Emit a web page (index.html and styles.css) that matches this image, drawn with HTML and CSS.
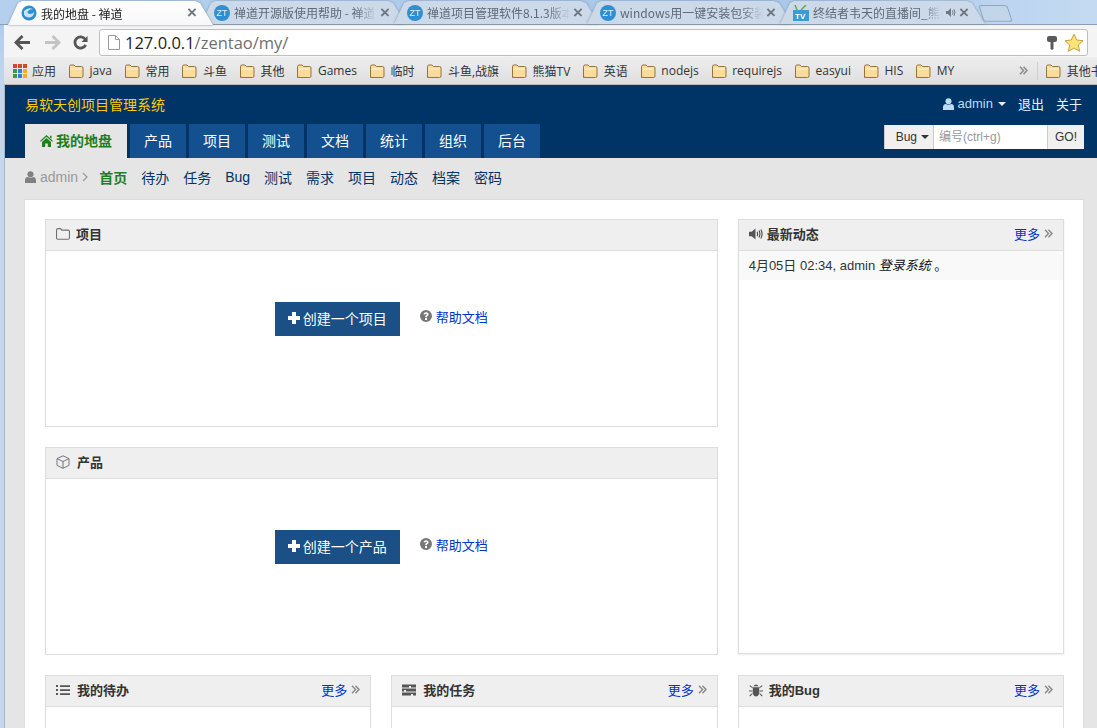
FILE: index.html
```html
<!DOCTYPE html>
<html lang="zh-CN">

<head>
    <meta charset="UTF-8">
    <title>我的地盘 - 禅道</title>
    <link rel="stylesheet" href="styles.css">
</head>

<body>
    <!-- 图标 -->
    <svg class="icon-defs" width="0" height="0">
        <symbol id="i-folder" viewBox="0 0 16 16">
            <path d="M1.500 14.500V3.500q0-1.500 1.500-1.500h3l1.500 1.500h6q1.500 0 1.500 1.500v8q0 1.500-1.500 1.500H3q-1.500 0-1.500-1.500z" fill="#f8dc9c" stroke="#97743c" />
            <path d="M2.500 6h11" stroke="#fff3d4" />
        </symbol>
        <symbol id="i-user" viewBox="0 0 12 13">
            <circle cx="6" cy="3.500" r="3.300" />
            <path d="M0 13V10q0-3 3-3.500q3 1.800 6 0q3 .5 3 3.500v3z" />
        </symbol>
        <symbol id="i-caret" viewBox="0 0 8 4">
            <path d="M0 0h8L4 4z" />
        </symbol>
        <symbol id="i-home" viewBox="0 0 13 12">
            <path d="M6.500 0L13 6l-.8.8L6.500 1.800.8 6.800 0 6zM2 7l4.500-4L11 7v5H7.800V8.500H5.200V12H2zM10 .8h1.500v3L10 2.500z" />
        </symbol>
        <symbol id="i-plus" viewBox="0 0 12 12">
            <path d="M4 0h4v4h4v4H8v4H4V8H0V4h4z" />
        </symbol>
        <symbol id="i-help" viewBox="0 0 12 12">
            <path fill-rule="evenodd" d="M6 0a6 6 0 1 0 0 12A6 6 0 0 0 6 0zM5 8h2v2H5zM3.500 4.300C3.700 3 4.700 2.200 6.100 2.200c1.500 0 2.500.9 2.500 2 0 1-.6 1.500-1.200 1.900-.4.300-.5.500-.5 1.100H5.200c0-1 .3-1.500.9-1.900.5-.3.700-.6.700-.9s-.3-.6-.8-.6c-.5 0-.8.300-.9.800z" />
        </symbol>
        <symbol id="i-folder-line" viewBox="0 0 13 11">
            <path d="M.5 9.500V1.800q0-1.300 1.300-1.300h2.400l1.200 1.400h5.800q1.300 0 1.300 1.300v5.800q0 1.300-1.300 1.300H1.800Q.5 10.300.5 9.500z" fill="none" stroke="#6f6f78" />
        </symbol>
        <symbol id="i-cube" viewBox="0 0 14 14">
            <path d="M7 .8l6 2.800v6.800l-6 2.900-6-2.900V3.600zM1 3.600l6 2.900 6-2.900M7 6.500v6.800" fill="none" stroke="#77777f" />
        </symbol>
        <symbol id="i-volume" viewBox="0 0 13 10">
            <path d="M0 3h2.500L6 0v10L2.500 7H0z" />
            <path d="M7.500 3q1 2 0 4M9.300 1.800q1.700 3.200 0 6.400M11 .8q2.300 4.200 0 8.400" fill="none" stroke="currentColor" />
        </symbol>
        <symbol id="i-list" viewBox="0 0 14 10">
            <path d="M0 0h2v2H0zM0 4h2v2H0zM0 8h2v2H0zM4 .2h10v1.700H4zM4 4.200h10v1.700H4zM4 8.200h10v1.700H4z" />
        </symbol>
        <symbol id="i-tasks" viewBox="0 0 14 11">
            <path d="M0 0h14v3H9V1.500H7V3H0zM0 4h14v3H4V5.500H2V7H0zM0 8h14v3H11V9.500H9V11H0z" />
        </symbol>
        <symbol id="i-bug" viewBox="0 0 13 13">
            <path d="M4 3q2.500-3 5 0zM3.500 4h6v6q-1 2.500-3 2.500t-3-2.500zM1 2l2.500 2-.6.7L.4 2.700zM12 2L9.500 4l.6.7 2.500-2zM0 7h3v1H0zM10 7h3v1h-3zM2.800 9.500l.5.800L1 12.500l-.6-.8zM10.200 9.500l-.5.800 2.300 2.200.6-.8z" />
        </symbol>
        <symbol id="i-more" viewBox="0 0 9 9">
            <path d="M1 .8l3.500 3.700L1 8.200M4.500 .8L8 4.500 4.500 8.200" fill="none" stroke="#8a8a8a" stroke-width="1.500" />
        </symbol>
        <symbol id="i-speaker" viewBox="0 0 10 9">
            <path d="M0 3h2l3-3v9L2 6H0z" />
            <path d="M6.500 2.500q1 2 0 4M8 1.200q1.800 3.300 0 6.600" fill="none" stroke="currentColor" />
        </symbol>
    </svg>

    <div class="tabstrip">
        <div class="tab tab-active">
            <svg class="favicon" viewBox="0 0 16 16">
                <circle cx="8" cy="8" r="7.500" fill="#2d8fd0" />
                <path d="M3 6q4-4 9-2-3 0-5 2t2 3q3 0 4-2 0 5-5 5.500Q2 12 3 6z" fill="#c9e6f7" />
            </svg>
            <span class="tab-title">我的地盘 - 禅道</span>
            <span class="tab-close">×</span>
        </div>
        <div class="tab">
            <span class="zt">ZT</span>
            <span class="tab-title">禅道开源版使用帮助 - 禅道</span>
            <span class="tab-close">×</span>
        </div>
        <div class="tab">
            <span class="zt">ZT</span>
            <span class="tab-title">禅道项目管理软件8.1.3版本</span>
            <span class="tab-close">×</span>
        </div>
        <div class="tab">
            <span class="zt">ZT</span>
            <span class="tab-title">windows用一键安装包安装</span>
            <span class="tab-close">×</span>
        </div>
        <div class="tab">
            <svg class="favicon" viewBox="0 0 16 16">
                <rect y="5" width="16" height="11" fill="#3a9bd5" />
                <path d="M4 5L2 0M8 5l5-5" stroke="#6aa642" stroke-width="1.500" />
                <text x="2" y="14" class="tv-text">TV</text>
            </svg>
            <span class="tab-title">终结者韦天的直播间_熊</span>
            <svg class="tab-sound"><use href="#i-speaker" /></svg>
            <span class="tab-close">×</span>
        </div>
        <div class="tab-new"></div>
    </div>

    <div class="toolbar">
        <svg class="tool-btn" viewBox="0 0 18 16">
            <path d="M9 1L2 8l7 7M2 8h15" fill="none" stroke="#555" stroke-width="3" />
        </svg>
        <svg class="tool-btn" viewBox="0 0 18 16">
            <path d="M9 1l7 7-7 7M16 8H1" fill="none" stroke="#c4c4c4" stroke-width="3" />
        </svg>
        <svg class="tool-btn" viewBox="0 0 18 16">
            <path d="M14.500 10.500A6 6 0 1 1 14 4.500" fill="none" stroke="#555" stroke-width="3" />
            <path d="M16.500 1v6.500H10z" fill="#555" />
        </svg>
        <div class="address">
            <svg class="page-icon" viewBox="0 0 12 15">
                <path d="M.5.500h7l4 4v10H.5z M7.500.500v4h4" fill="#fff" stroke="#9a9a9a" />
            </svg>
            <span class="url"><span class="url-host">127.0.0.1</span>/zentao/my/</span>
            <svg class="key-icon" viewBox="0 0 10 14">
                <path d="M2 0h6q2 0 2 2v2q0 2-2 2H6.500v7L5 14l-1.500-1V6H2Q0 6 0 4V2q0-2 2-2z" fill="#5a5a5a" />
            </svg>
            <svg class="star-icon" viewBox="0 0 20 19">
                <path d="M10 1l2.700 6 6.300.7-4.700 4.300 1.300 6.300L10 15l-5.600 3.300L5.700 12 1 7.700 7.300 7z" fill="#fbe27a" stroke="#c9a13e" />
            </svg>
        </div>
    </div>

    <div class="bookmarks">
        <div class="bm">
            <svg class="apps" viewBox="0 0 14 14">
                <rect width="4" height="4" fill="#d8452e" />
                <rect x="5" width="4" height="4" fill="#d8452e" />
                <rect x="10" width="4" height="4" fill="#d8452e" />
                <rect y="5" width="4" height="4" fill="#3c9a4a" />
                <rect x="5" y="5" width="4" height="4" fill="#3b78e0" />
                <rect x="10" y="5" width="4" height="4" fill="#f2b01e" />
                <rect y="10" width="4" height="4" fill="#3c9a4a" />
                <rect x="5" y="10" width="4" height="4" fill="#3b78e0" />
                <rect x="10" y="10" width="4" height="4" fill="#f2b01e" />
            </svg>应用
        </div>
        <div class="bm"><svg class="bm-folder"><use href="#i-folder" /></svg>java</div>
        <div class="bm"><svg class="bm-folder"><use href="#i-folder" /></svg>常用</div>
        <div class="bm"><svg class="bm-folder"><use href="#i-folder" /></svg>斗鱼</div>
        <div class="bm"><svg class="bm-folder"><use href="#i-folder" /></svg>其他</div>
        <div class="bm"><svg class="bm-folder"><use href="#i-folder" /></svg>Games</div>
        <div class="bm"><svg class="bm-folder"><use href="#i-folder" /></svg>临时</div>
        <div class="bm"><svg class="bm-folder"><use href="#i-folder" /></svg>斗鱼,战旗</div>
        <div class="bm"><svg class="bm-folder"><use href="#i-folder" /></svg>熊猫TV</div>
        <div class="bm"><svg class="bm-folder"><use href="#i-folder" /></svg>英语</div>
        <div class="bm"><svg class="bm-folder"><use href="#i-folder" /></svg>nodejs</div>
        <div class="bm"><svg class="bm-folder"><use href="#i-folder" /></svg>requirejs</div>
        <div class="bm"><svg class="bm-folder"><use href="#i-folder" /></svg>easyui</div>
        <div class="bm"><svg class="bm-folder"><use href="#i-folder" /></svg>HIS</div>
        <div class="bm"><svg class="bm-folder"><use href="#i-folder" /></svg>MY</div>
        <svg class="bm-more"><use href="#i-more" /></svg>
        <div class="bm bm-other"><svg class="bm-folder"><use href="#i-folder" /></svg>其他书</div>
    </div>

    <div class="page">
        <header class="header">
            <div class="header-top">
                <a class="brand">易软天创项目管理系统</a>
                <div class="topnav">
                    <a class="topnav-user">
                        <svg class="icon-user-top"><use href="#i-user" /></svg>admin
                        <svg class="caret"><use href="#i-caret" /></svg>
                    </a>
                    <a>退出</a>
                    <a>关于</a>
                </div>
            </div>
            <div class="header-nav">
                <nav class="mainnav">
                    <a class="active"><svg class="icon-home"><use href="#i-home" /></svg>我的地盘</a>
                    <a>产品</a>
                    <a>项目</a>
                    <a>测试</a>
                    <a>文档</a>
                    <a>统计</a>
                    <a>组织</a>
                    <a>后台</a>
                </nav>
                <div class="search">
                    <span class="search-type">Bug<svg class="caret caret-dark"><use href="#i-caret" /></svg></span>
                    <span class="search-input">编号(ctrl+g)</span>
                    <span class="search-go">GO!</span>
                </div>
            </div>
        </header>

        <div class="subnav">
            <span class="subnav-user"><svg class="icon-user-sub"><use href="#i-user" /></svg>admin<svg class="icon-arrow" viewBox="0 0 6 10"><path d="M1 1l4 4-4 4" fill="none" stroke="#999" stroke-width="1.200" /></svg></span>
            <a class="active">首页</a>
            <a>待办</a>
            <a>任务</a>
            <a>Bug</a>
            <a>测试</a>
            <a>需求</a>
            <a>项目</a>
            <a>动态</a>
            <a>档案</a>
            <a>密码</a>
        </div>

        <main class="card">
            <section class="panel panel-wide">
                <div class="panel-head">
                    <svg class="panel-icon icon-tight"><use href="#i-folder-line" /></svg>
                    <span class="panel-title">项目</span>
                </div>
                <div class="panel-create">
                    <a class="btn-create"><svg class="icon-plus"><use href="#i-plus" /></svg>创建一个项目</a>
                    <a class="help"><svg class="icon-help"><use href="#i-help" /></svg>帮助文档</a>
                </div>
            </section>

            <section class="panel panel-side">
                <div class="panel-head">
                    <svg class="panel-icon icon-dark icon-volume"><use href="#i-volume" /></svg>
                    <span class="panel-title">最新动态</span>
                    <a class="more">更多<svg class="icon-more"><use href="#i-more" /></svg></a>
                </div>
                <div class="action-row">4月05日 02:34, admin <em>登录系统</em> 。</div>
            </section>

            <section class="panel panel-wide">
                <div class="panel-head">
                    <svg class="panel-icon"><use href="#i-cube" /></svg>
                    <span class="panel-title">产品</span>
                </div>
                <div class="panel-create">
                    <a class="btn-create"><svg class="icon-plus"><use href="#i-plus" /></svg>创建一个产品</a>
                    <a class="help"><svg class="icon-help"><use href="#i-help" /></svg>帮助文档</a>
                </div>
            </section>

            <section class="panel">
                <div class="panel-head">
                    <svg class="panel-icon icon-dark"><use href="#i-list" /></svg>
                    <span class="panel-title">我的待办</span>
                    <a class="more">更多<svg class="icon-more"><use href="#i-more" /></svg></a>
                </div>
            </section>

            <section class="panel">
                <div class="panel-head">
                    <svg class="panel-icon icon-dark"><use href="#i-tasks" /></svg>
                    <span class="panel-title">我的任务</span>
                    <a class="more">更多<svg class="icon-more"><use href="#i-more" /></svg></a>
                </div>
            </section>

            <section class="panel">
                <div class="panel-head">
                    <svg class="panel-icon icon-dark icon-tight"><use href="#i-bug" /></svg>
                    <span class="panel-title">我的Bug</span>
                    <a class="more">更多<svg class="icon-more"><use href="#i-more" /></svg></a>
                </div>
            </section>
        </main>
    </div>
</body>

</html>
```

FILE: styles.css
```css
html,
body {
    height: 100%;
}

body {
    margin: 0;
    height: 728px;
    overflow: hidden;
    background: linear-gradient(#a9c8ea, #c3d8ee 90px);
    font-family: "Liberation Sans", "Noto Sans CJK SC", sans-serif;
    font-size: 13px;
    color: #333;
}

a {
    cursor: pointer;
}

.icon-defs {
    position: absolute;
}

/* 浏览器标签栏 */
.tabstrip {
    display: flex;
    height: 25px;
    padding-left: 8px;
    box-sizing: border-box;
    border-bottom: 1px solid #8b9db2;
    background: linear-gradient(90deg, #b5d0ee, #a7c7ea 70%, #c4daf2);
    font-family: "Noto Sans CJK SC", "Noto Sans", sans-serif;
    font-size: 12px;
}

.tab {
    position: relative;
    display: flex;
    align-items: center;
    flex: none;
    width: 205px;
    height: 24px;
    margin-right: -12px;
    padding: 1px 15px 0 13px;
    box-sizing: border-box;
    color: #5f6a76;
    filter: drop-shadow(0 0 1px #7c8fa6);
}

.tab::before {
    content: "";
    position: absolute;
    inset: 0;
    z-index: -1;
    background: #cbd9e9;
    clip-path: polygon(0 100%, 10px 3px, 14px 1px, calc(100% - 18px) 1px, calc(100% - 13px) 3px, 100% 100%);
}

.tab-active {
    z-index: 1;
    height: 25px;
    color: #222;
}

.tab-active::before {
    background: linear-gradient(#fff, #f7f7f7);
}

.favicon,
.zt {
    flex: none;
    width: 16px;
    height: 16px;
    margin-right: 4px;
}

.zt {
    border-radius: 50%;
    background: #2f8fd3;
    color: #dff1fb;
    font-family: "Liberation Sans", sans-serif;
    font-size: 9px;
    line-height: 16px;
    text-align: center;
}

.tv-text {
    font-family: "Liberation Sans", sans-serif;
    font-size: 8px;
    font-weight: bold;
    fill: #fff;
}

.tab-title {
    flex: 1;
    min-width: 0;
    overflow: hidden;
    white-space: nowrap;
    -webkit-mask-image: linear-gradient(90deg, #000 85%, transparent);
    mask-image: linear-gradient(90deg, #000 85%, transparent);
}

.tab-active .tab-title {
    -webkit-mask-image: none;
    mask-image: none;
}

.tab-close {
    flex: none;
    width: 12px;
    margin-left: 2px;
    color: #6e7680;
    font-family: "Liberation Sans", sans-serif;
    font-size: 17px;
    font-weight: bold;
    line-height: 16px;
    text-align: center;
}

.tab-sound {
    flex: none;
    width: 10px;
    height: 9px;
    margin-left: 4px;
    color: #6e7680;
    fill: #6e7680;
}

.tab-new {
    flex: none;
    width: 27px;
    height: 15px;
    margin: 5px 0 0 8px;
    border: 1px solid #8fa5be;
    border-radius: 3px;
    background: #c3d5e9;
    transform: skewX(18deg);
}

/* 地址栏 */
.toolbar {
    display: flex;
    align-items: center;
    height: 32px;
    margin-left: 4px;
    padding: 3px 9px 0 10px;
    box-sizing: border-box;
    background: #f4f4f4;
}

.tool-btn {
    flex: none;
    width: 17px;
    height: 15px;
    margin-right: 13px;
}

.tool-btn:nth-child(2) {
    margin-right: 11px;
}

.tool-btn:nth-child(3) {
    margin-right: 10px;
}

.address {
    display: flex;
    align-items: center;
    flex: 1;
    height: 27px;
    padding: 0 3px 0 8px;
    box-sizing: border-box;
    border: 1px solid #bfbfbf;
    border-radius: 3px;
    background: #fff;
}

.page-icon {
    width: 12px;
    height: 15px;
    margin-right: 5px;
}

.url {
    flex: 1;
    color: #6f6f6f;
    font-family: "Open Sans", sans-serif;
    font-size: 16.500px;
}

.url-host {
    color: #222;
}

.key-icon {
    width: 10px;
    height: 14px;
    margin-right: 7px;
}

.star-icon {
    width: 20px;
    height: 19px;
}

/* 书签栏 */
.bookmarks {
    display: flex;
    align-items: center;
    gap: 12px;
    height: 28px;
    margin-left: 4px;
    padding-left: 9px;
    box-sizing: border-box;
    overflow: hidden;
    background: linear-gradient(#eeeeee, #dedede);
    border-bottom: 1px solid #b8b8b8;
    color: #333;
    font-family: "Open Sans", "Noto Sans CJK SC", sans-serif;
    font-size: 12px;
    white-space: nowrap;
}

.bm {
    display: flex;
    align-items: center;
    flex: none;
}

.apps {
    width: 14px;
    height: 14px;
    margin-right: 5px;
}

.bm-folder {
    flex: none;
    width: 16px;
    height: 16px;
    margin-right: 5.500px;
}

.bm-more {
    flex: none;
    width: 9px;
    height: 9px;
    margin-left: 53px;
}

.bm-other {
    margin-left: -3px;
    padding-left: 7px;
    border-left: 1px solid #cfcfcf;
}

/* 页面 */
.page {
    height: 643px;
    margin-left: 4px;
    border-left: 1px solid #a7b6c6;
    overflow: hidden;
    background: #e5e5e5;
}

.header {
    height: 73px;
    background: #003366;
    color: #fff;
}

.header-top {
    display: flex;
    align-items: center;
    justify-content: space-between;
    height: 39px;
    padding: 0 15px 2px 20px;
    box-sizing: border-box;
}

.brand {
    color: #ffcc00;
    font-size: 14px;
}

.topnav {
    display: flex;
    align-items: center;
    gap: 12px;
    color: #eaf3fb;
}

.topnav-user {
    display: flex;
    align-items: center;
    color: #bcdcf4;
}

.icon-user-top {
    width: 11px;
    height: 12px;
    margin-right: 4px;
    fill: #bcdcf4;
}

.caret {
    width: 8px;
    height: 4px;
    margin-left: 5px;
    fill: #e6eef6;
}

.caret-dark {
    margin-left: 4px;
    fill: #333;
}

.header-nav {
    display: flex;
    justify-content: space-between;
    height: 34px;
    padding: 0 13px 0 20px;
}

.mainnav {
    display: flex;
    gap: 3px;
}

.mainnav a {
    width: 56px;
    background: #12508f;
    color: #fff;
    font-size: 14px;
    line-height: 34px;
    text-align: center;
}

.mainnav .active {
    width: 102px;
    background: #e5e5e5;
    color: #1d7f1d;
    font-weight: bold;
}

.icon-home {
    width: 13px;
    height: 12px;
    margin-right: 3px;
    vertical-align: -1px;
    fill: #1d7f1d;
}

.search {
    display: flex;
    height: 24px;
    margin-top: 1px;
    color: #333;
    font-size: 12px;
    line-height: 24px;
}

.search-type {
    display: flex;
    align-items: center;
    justify-content: flex-end;
    width: 44px;
    padding-right: 4px;
    border-left: 1px solid #ccc;
    background: #f0f0f0;
}

.search-input {
    width: 108px;
    padding-left: 5px;
    border-left: 1px solid #ccc;
    background: #fff;
    color: #999;
}

.search-go {
    width: 36px;
    border-left: 1px solid #ccc;
    background: #f0f0f0;
    text-align: center;
}

.subnav {
    display: flex;
    align-items: center;
    gap: 14px;
    height: 41px;
    padding: 0 0 4px 20px;
    box-sizing: border-box;
    color: #003366;
    font-size: 14px;
}

.subnav .active {
    color: #1d7f1d;
    font-weight: bold;
}

.subnav-user {
    display: flex;
    align-items: center;
    margin-right: -3px;
    color: #999;
}

.icon-user-sub {
    width: 11px;
    height: 12px;
    margin-right: 4px;
    fill: #808080;
}

.icon-arrow {
    width: 6px;
    height: 10px;
    margin-left: 4px;
}

/* 内容卡片 */
.card {
    display: grid;
    grid-template-columns: repeat(3, 1fr);
    grid-auto-rows: min-content;
    gap: 20px;
    height: 540px;
    margin: 0 13px 0 19px;
    padding: 19px 19px 0 20px;
    box-sizing: border-box;
    border: 1px solid #dddddd;
    background: #fff;
}

.panel {
    min-height: 80px;
    border: 1px solid #dddddd;
    background: #fff;
}

.panel-wide {
    grid-column: span 2;
    height: 208px;
    box-sizing: border-box;
}

.panel-side {
    grid-column: 3;
    grid-row: 1 / span 2;
    height: 435px;
    box-sizing: border-box;
    box-shadow: 0 1px 2px rgba(0, 0, 0, 0.08);
}

.panel-head {
    display: flex;
    align-items: center;
    height: 31px;
    padding: 0 10px 4px;
    box-sizing: border-box;
    border-bottom: 1px solid #dddddd;
    background: #efefef;
}

.panel-icon {
    flex: none;
    width: 14px;
    height: 14px;
    margin: 2px 7px 0 0;
    fill: #77777f;
}

.icon-dark {
    color: #444;
    fill: #555;
}

.icon-tight {
    margin-right: 6px;
}

.icon-volume {
    margin-right: 4px;
}

.panel-title {
    font-weight: bold;
    color: #333;
}

.more {
    display: flex;
    align-items: center;
    margin-left: auto;
    color: #0033cc;
}

.icon-more {
    width: 9px;
    height: 9px;
    margin-left: 4px;
}

.panel-create {
    display: flex;
    align-items: center;
    justify-content: center;
    gap: 20px;
    padding-top: 51px;
}

.btn-create {
    display: flex;
    align-items: center;
    justify-content: center;
    width: 125px;
    height: 34px;
    padding-bottom: 2px;
    box-sizing: border-box;
    background: #1a5085;
    color: #fff;
    font-size: 14px;
}

.icon-plus {
    width: 12px;
    height: 12px;
    margin-right: 3px;
    fill: #fff;
}

.help {
    display: flex;
    align-items: center;
    margin-top: -6px;
    color: #0033cc;
    font-size: 13px;
}

.icon-help {
    width: 12px;
    height: 12px;
    margin-right: 4px;
    fill: #777;
}

.action-row {
    height: 29px;
    padding: 0 10px;
    background: #f9f9f9;
    color: #333;
    font-size: 13px;
    line-height: 29px;
}

.action-row em {
    color: #111;
}
```
